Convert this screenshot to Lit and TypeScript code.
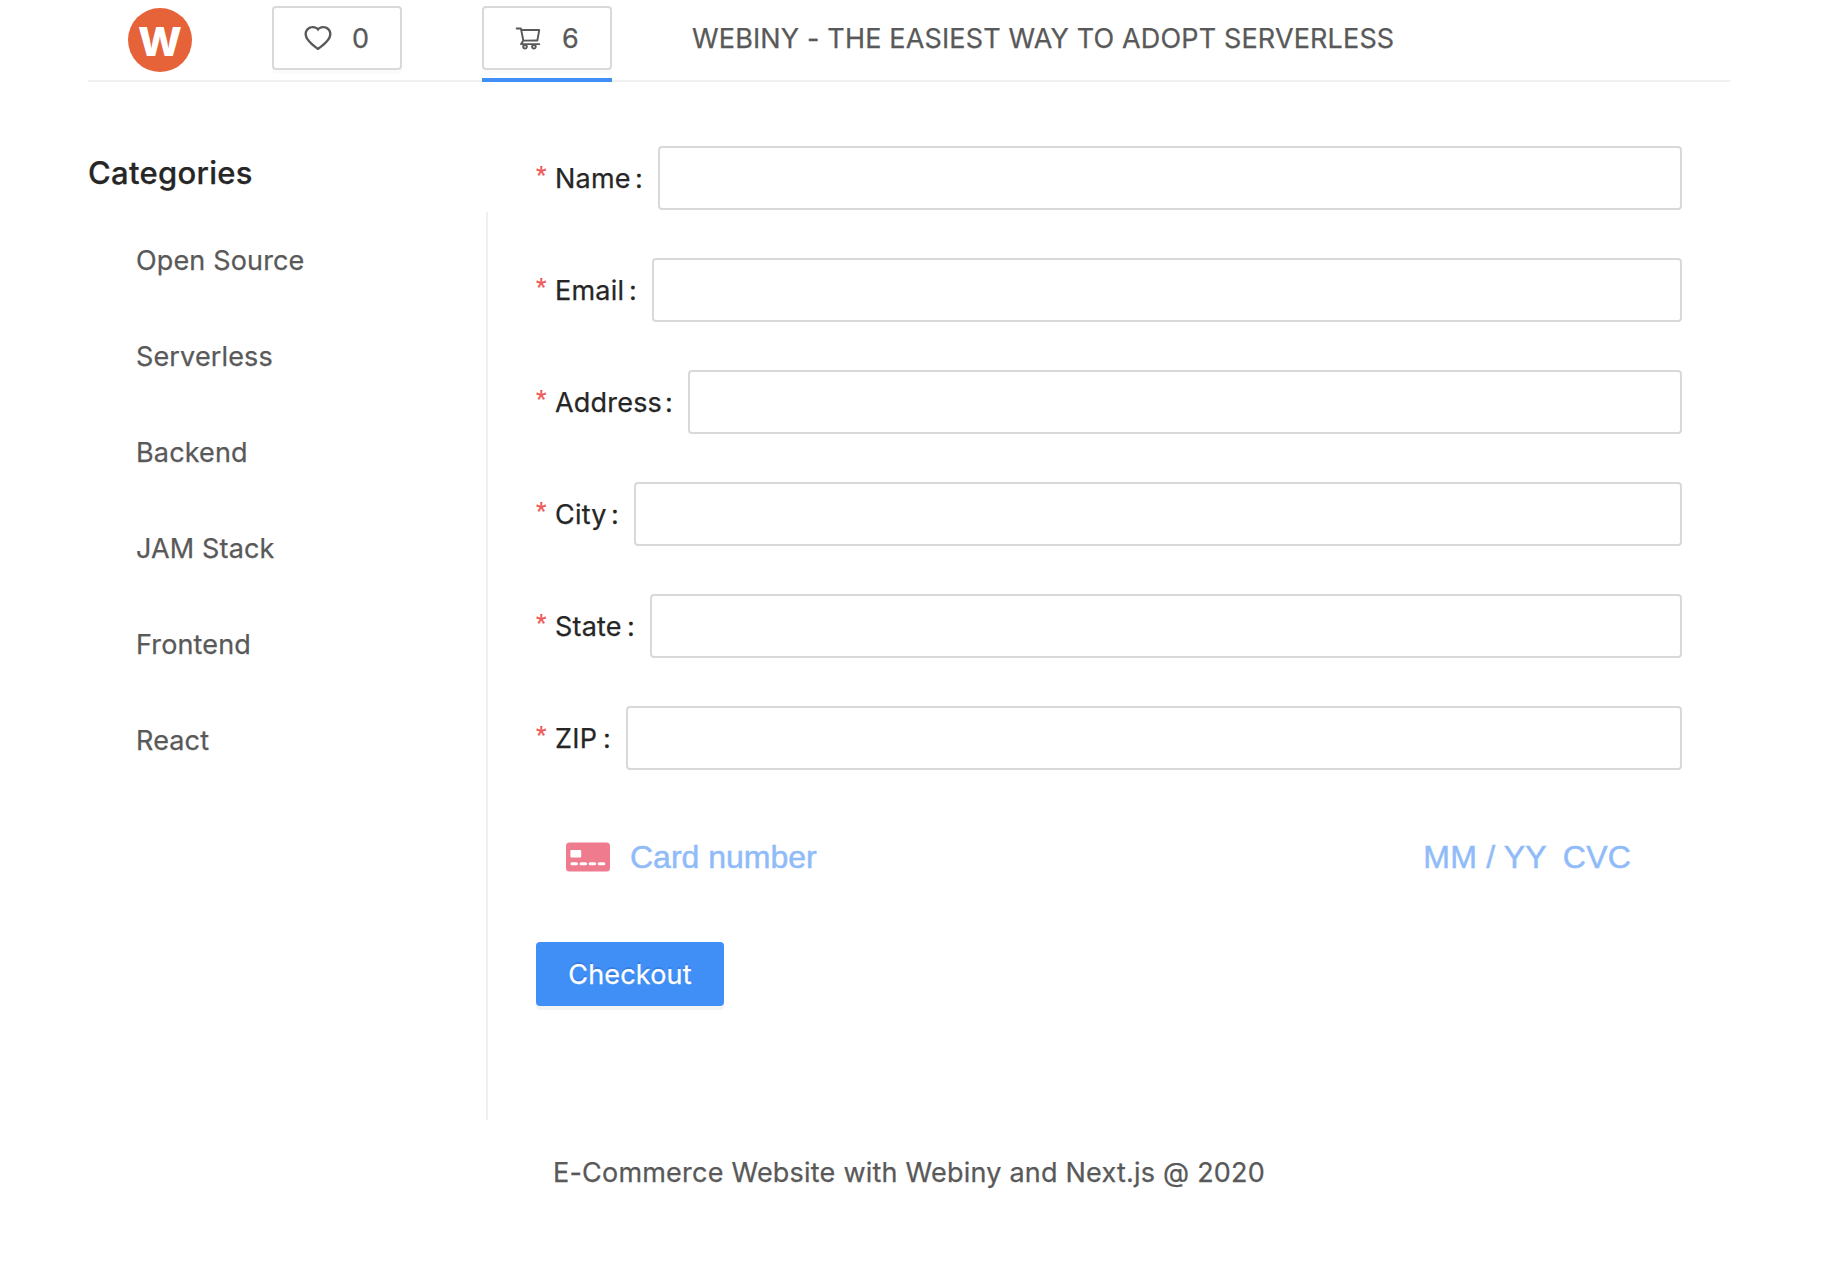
import { LitElement, html, css, svg } from "lit";
import { customElement } from "lit/decorators.js";

const HEART =
  "M923 283.6a260.04 260.04 0 00-56.9-82.8 264.4 264.4 0 00-84-55.5A265.34 265.34 0 00679.7 125c-49.3 0-97.4 13.5-139.2 39-10 6.1-19.5 12.8-28.5 20.1-9-7.3-18.5-14-28.5-20.1-41.8-25.5-89.9-39-139.2-39-35.5 0-69.9 6.8-102.4 20.3-31.4 13-59.7 31.7-84 55.5a258.44 258.44 0 00-56.9 82.8c-13.9 32.3-21 66.6-21 101.9 0 33.3 6.8 68 20.3 103.3 11.3 29.5 27.5 60.1 48.2 91 32.8 48.9 77.9 99.9 133.9 151.6 92.8 85.7 184.7 144.9 188.6 147.3l23.7 15.2c10.5 6.7 24 6.7 34.5 0l23.7-15.2c3.9-2.5 95.7-61.6 188.6-147.3 56-51.7 101.1-102.7 133.9-151.6 20.7-30.9 37-61.5 48.2-91 13.5-35.3 20.3-70 20.3-103.3.1-35.3-7-69.6-20.9-101.9zM512 814.8S156 586.7 156 385.5C156 283.6 240.3 201 344.3 201c73.1 0 136.5 40.8 167.7 100.4C543.2 241.8 606.6 201 679.7 201c104 0 188.3 82.6 188.3 184.5 0 201.2-356 429.3-356 429.3z";
const CART =
  "M922.9 701.9H327.4l29.9-60.9 496.8-.9c16.8 0 31.2-12 34.2-28.6l68.8-385.1c1.8-10.1-.9-20.5-7.5-28.4a34.99 34.99 0 00-26.6-12.5l-632-2.1-5.4-25.4c-3.4-16.2-18-28-34.6-28H96.5a35.3 35.3 0 100 70.6h125.9L246 312.8l58.1 281.3-74.8 122.1a34.96 34.96 0 00-3 36.8c6 11.9 18.1 19.4 31.5 19.4h62.8a102.43 102.43 0 00-20.6 61.7c0 56.6 46 102.6 102.6 102.6s102.6-46 102.6-102.6c0-22.3-7.4-44-20.6-61.7h161.1a102.43 102.43 0 00-20.6 61.7c0 56.6 46 102.6 102.6 102.6s102.6-46 102.6-102.6c0-22.3-7.4-44-20.6-61.7H923c19.4 0 35.3-15.8 35.3-35.3a35.42 35.42 0 00-35.4-35.2zM305.7 253l575.8 1.9-56.4 315.8-452.3.8L305.7 253zm96.9 612.7c-17.4 0-31.6-14.2-31.6-31.6 0-17.4 14.2-31.6 31.6-31.6s31.6 14.2 31.6 31.6a31.6 31.6 0 01-31.6 31.6zm325.1 0c-17.4 0-31.6-14.2-31.6-31.6 0-17.4 14.2-31.6 31.6-31.6s31.6 14.2 31.6 31.6a31.6 31.6 0 01-31.6 31.6z";

const CATEGORIES = ["Open Source", "Serverless", "Backend", "JAM Stack", "Frontend", "React"];

// Field name and the width its label takes before the input starts.
const FIELDS: [string, number][] = [
  ["Name", 122],
  ["Email", 116],
  ["Address", 152],
  ["City", 98],
  ["State", 114],
  ["ZIP", 90],
];

@customElement("app-root")
export class AppRoot extends LitElement {
  static styles = css`
    :host {
      display: block;
      box-sizing: border-box;
      width: 1826px;
      height: 1266px;
      padding: 0 96px 0 88px;
      overflow: hidden;
      background: #fff;
      color: #595959;
      font: 27px/44px Inter, "Liberation Sans", sans-serif;
      letter-spacing: 0.15px;
      -webkit-text-stroke: 0.25px currentColor;
    }
    * {
      box-sizing: border-box;
    }
    svg {
      display: block;
      flex: none;
    }
    .header {
      display: flex;
      height: 82px;
      border-bottom: 2px solid #f0f0f0;
    }
    .logo {
      margin: 8px 80px 0 40px;
    }
    .logo-letter {
      font: 800 39px Inter, sans-serif;
      -webkit-text-stroke: 0;
    }
    .tab {
      height: 82px;
      padding-top: 6px;
      margin-right: 80px;
    }
    .tab.active {
      border-bottom: 4px solid #408ff7;
    }
    .count {
      display: flex;
      align-items: center;
      gap: 20px;
      width: 130px;
      height: 64px;
      padding: 0 0 0 30px;
      border: 2px solid #d9d9d9;
      border-radius: 4px;
      background: #fff;
      box-shadow: 0 4px 0 rgba(0, 0, 0, 0.016);
      color: #595959;
      font: inherit;
    }
    .count span {
      padding-top: 2px;
    }
    .title {
      padding-top: 17px;
      white-space: nowrap;
    }
    .body {
      display: flex;
    }
    .side {
      width: 400px;
      padding-top: 68px;
    }
    h3 {
      margin: 0;
      height: 62px;
      color: #262626;
      font-weight: 500;
      font-size: 31px;
      line-height: 45px;
      letter-spacing: 0.3px;
    }
    .menu {
      display: flex;
      flex-direction: column;
      gap: 16px;
      height: 908px;
      margin: 0;
      padding: 8px 0 0 48px;
      border-right: 2px solid #f0f0f0;
      list-style: none;
    }
    .menu li {
      height: 80px;
      line-height: 82px;
    }
    .form {
      width: 1146px;
      margin-left: 48px;
      padding-top: 64px;
    }
    .row {
      display: flex;
      height: 64px;
      margin-bottom: 48px;
      color: #262626;
    }
    .label {
      display: flex;
      flex: none;
      line-height: 66px;
      letter-spacing: 0.2px;
    }
    .star {
      width: 19px;
      color: #ec5b56;
      font-family: "Liberation Sans", sans-serif;
      line-height: 60px;
    }
    .colon {
      margin: 0 15px 0 auto;
    }
    .input {
      flex: 1;
      min-width: 0;
      height: 64px;
      border: 2px solid #d9d9d9;
      border-radius: 4px;
      background: #fff;
      outline: none;
    }
    .card {
      display: flex;
      align-items: center;
      height: 40px;
      margin-top: 67px;
      padding: 0 51px 0 30px;
      color: #90bbf9;
      font: 32px/40px "Liberation Sans", Arial, sans-serif;
      letter-spacing: 0;
      -webkit-text-stroke: 0.5px currentColor;
    }
    .card-number {
      margin: 0 auto 0 20px;
    }
    .expiry,
    .cvc {
      letter-spacing: 0.2px;
    }
    .cvc {
      margin-left: 16px;
    }
    .checkout {
      width: 188px;
      height: 64px;
      margin: 65px 0 0;
      padding: 2px 0 0;
      border: 0;
      border-radius: 4px;
      background: #408ff7;
      box-shadow: 0 4px 0 rgba(0, 0, 0, 0.045);
      color: #fff;
      font: inherit;
      letter-spacing: 0.15px;
      text-shadow: 0 -2px 0 rgba(0, 0, 0, 0.12);
    }
    .footer {
      margin-top: 31px;
      text-align: center;
      letter-spacing: 0.22px;
    }
  `;

  private icon(path: string, viewBox: string) {
    return html`<svg width="28" height="28" viewBox=${viewBox} fill="currentColor">${svg`<path d=${path} />`}</svg>`;
  }

  render() {
    return html`
      <header class="header">
        <svg class="logo" width="64" height="64" viewBox="0 0 64 64">
          <circle cx="32" cy="32" r="32" fill="#e66239" />
          <text class="logo-letter" x="10" y="48" fill="#fff" textLength="44" lengthAdjust="spacingAndGlyphs">W</text>
        </svg>
        <div class="tab">
          <button class="count">${this.icon(HEART, "64 64 896 896")}<span>0</span></button>
        </div>
        <div class="tab active">
          <button class="count">${this.icon(CART, "0 0 1024 1024")}<span>6</span></button>
        </div>
        <div class="title">WEBINY - THE EASIEST WAY TO ADOPT SERVERLESS</div>
      </header>
      <div class="body">
        <aside class="side">
          <h3>Categories</h3>
          <ul class="menu">
            ${CATEGORIES.map((name) => html`<li>${name}</li>`)}
          </ul>
        </aside>
        <main class="form">
          ${FIELDS.map(
            ([name, width]) => html`
              <div class="row">
                <label class="label" style="width:${width}px">
                  <span class="star">*</span><span>${name}</span><span class="colon">:</span>
                </label>
                <input class="input" />
              </div>
            `
          )}
          <div class="card">
            <svg width="44" height="30" viewBox="0 0 44 30">
              <rect y="0.5" width="44" height="29" rx="3.5" fill="#ef7b8f" />
              <g fill="#fff">
                <rect x="4.4" y="8" width="10.8" height="7.6" rx="1" />
                <rect x="4.4" y="20.3" width="7.6" height="3" rx="1.5" />
                <rect x="13.5" y="20.3" width="7.6" height="3" rx="1.5" />
                <rect x="22.6" y="20.3" width="7.6" height="3" rx="1.5" />
                <rect x="31.7" y="20.3" width="7.6" height="3" rx="1.5" />
              </g>
            </svg>
            <span class="card-number">Card number</span>
            <span class="expiry">MM / YY</span>
            <span class="cvc">CVC</span>
          </div>
          <button class="checkout">Checkout</button>
        </main>
      </div>
      <footer class="footer">E-Commerce Website with Webiny and Next.js @ 2020</footer>
    `;
  }
}
